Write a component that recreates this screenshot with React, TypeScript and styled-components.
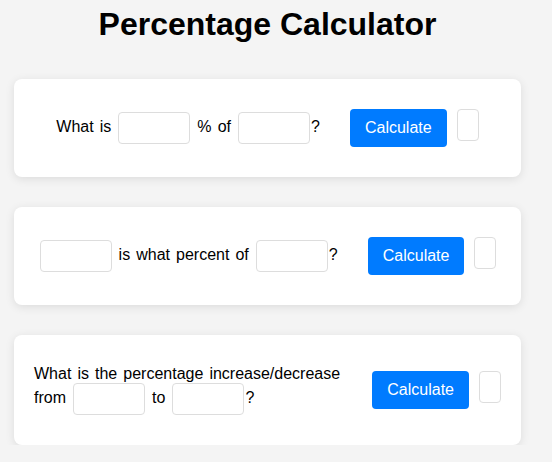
import React from 'react'
import styled, { createGlobalStyle } from 'styled-components'

const GlobalStyle = createGlobalStyle`
	body {
		margin: 0;
		background: #f4f4f4;
		font-family: "Liberation Sans", Arial, sans-serif;
		color: #000;
	}
`

const Page = styled.div`
	width: 507px;
	margin-left: 14px;
	padding-top: 6px;
`

const Title = styled.h1`
	margin: 0 0 36px;
	font-size: 32px;
	line-height: 37px;
	font-weight: bold;
	text-align: center;
`

const Cards = styled.div`
	display: flex;
	flex-direction: column;
	gap: 30px;
`

const Card = styled.div`
	display: flex;
	align-items: center;
	justify-content: center;
	gap: 30px;
	padding: 30px 20px;
	background: #fff;
	border-radius: 8px;
	box-shadow: 0 2px 10px rgba(0, 0, 0, 0.1);
`

const Question = styled.div`
	flex: 0 1 auto;
	font-size: 16px;
	line-height: 18px;
	word-spacing: 1.6px;
`

const Field = styled.input`
	box-sizing: border-box;
	width: 72px;
	height: 32px;
	margin: 0 1px;
	padding: 0 6px;
	border: 1px solid #ddd;
	border-radius: 4px;
	vertical-align: middle;
	font: inherit;
	outline: none;
`

const Actions = styled.div`
	display: flex;
	align-items: flex-start;
	gap: 10px;
	flex-shrink: 0;
`

const Button = styled.button`
	padding: 10px 15px;
	border: none;
	border-radius: 4px;
	background: #007bff;
	color: #fff;
	font-family: inherit;
	font-size: 16px;
	line-height: 18px;
	cursor: pointer;
`

const Result = styled.div`
	box-sizing: border-box;
	width: 22px;
	height: 32px;
	border: 1px solid #ddd;
	border-radius: 4px;
`

const App = () => {
	return (
		<Page>
			<GlobalStyle />
			<Title>Percentage Calculator</Title>
			<Cards>
				<Card>
					<Question>What is <Field type="text" /> % of <Field type="text" />?</Question>
					<Actions>
						<Button>Calculate</Button>
						<Result />
					</Actions>
				</Card>
				<Card>
					<Question><Field type="text" /> is what percent of <Field type="text" />?</Question>
					<Actions>
						<Button>Calculate</Button>
						<Result />
					</Actions>
				</Card>
				<Card>
					<Question>What is the percentage increase/decrease from <Field type="text" /> to <Field type="text" />?</Question>
					<Actions>
						<Button>Calculate</Button>
						<Result />
					</Actions>
				</Card>
			</Cards>
		</Page>
	)
}

export default App
